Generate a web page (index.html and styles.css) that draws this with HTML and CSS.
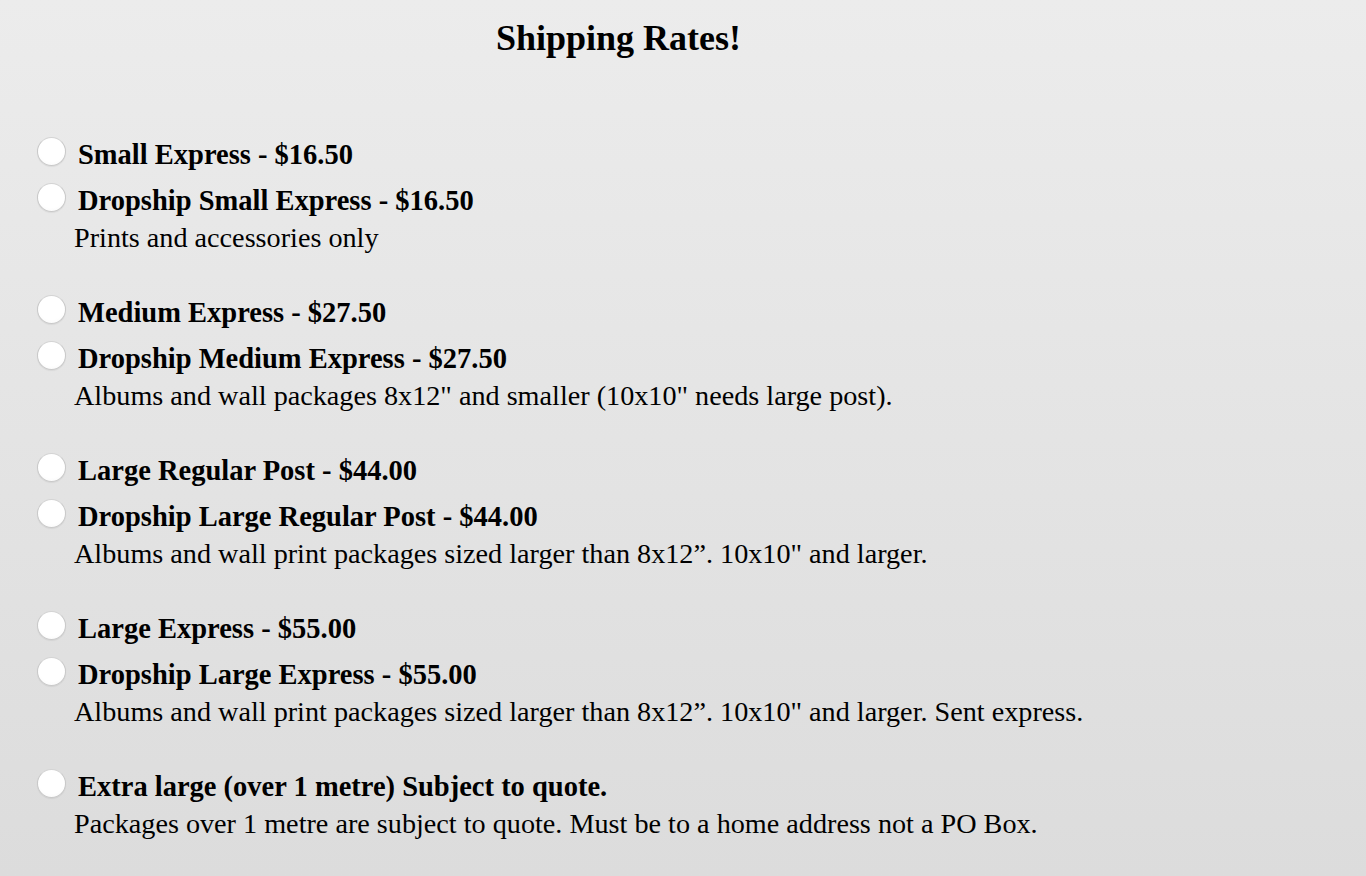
FILE: index.html
```html
<!DOCTYPE html>
<html>
<head>
<meta charset="utf-8">
<link rel="stylesheet" href="styles.css">
</head>
<body>
<div class="page">
  <h1 class="title">Shipping Rates!</h1>
  <div class="list">
    <div class="group">
      <label class="opt"><span class="radio"></span><span class="name">Small Express - $16.50</span></label>
      <label class="opt"><span class="radio"></span><span class="name">Dropship Small Express - $16.50</span></label>
      <p class="desc">Prints and accessories only</p>
    </div>
    <div class="group">
      <label class="opt"><span class="radio"></span><span class="name">Medium Express - $27.50</span></label>
      <label class="opt"><span class="radio"></span><span class="name">Dropship Medium Express - $27.50</span></label>
      <p class="desc">Albums and wall packages 8x12" and smaller (10x10" needs large post).</p>
    </div>
    <div class="group">
      <label class="opt"><span class="radio"></span><span class="name">Large Regular Post - $44.00</span></label>
      <label class="opt"><span class="radio"></span><span class="name">Dropship Large Regular Post - $44.00</span></label>
      <p class="desc">Albums and wall print packages sized larger than 8x12”. 10x10" and larger.</p>
    </div>
    <div class="group">
      <label class="opt"><span class="radio"></span><span class="name">Large Express - $55.00</span></label>
      <label class="opt"><span class="radio"></span><span class="name">Dropship Large Express - $55.00</span></label>
      <p class="desc">Albums and wall print packages sized larger than 8x12”. 10x10" and larger. Sent express.</p>
    </div>
    <div class="group">
      <label class="opt"><span class="radio"></span><span class="name">Extra large (over 1 metre) Subject to quote.</span></label>
      <p class="desc">Packages over 1 metre are subject to quote. Must be to a home address not a PO Box.</p>
    </div>
  </div>
</div>
</body>
</html>
```
FILE: styles.css
```css
html, body {
  margin: 0;
  padding: 0;
  height: 100%;
}
body {
  background: linear-gradient(to bottom, #ececec 0%, #dcdcdc 100%);
  font-family: "Liberation Serif", "Times New Roman", serif;
  color: #000;
}
.page {
  width: 1237px;
  padding-top: 17px;
}
.title {
  margin: 0;
  text-align: center;
  font-size: 36px;
  font-weight: bold;
  line-height: 42px;
}
.list {
  padding-top: 74px;
  padding-left: 37px;
  display: flex;
  flex-direction: column;
  gap: 36px;
}
.group {
  display: flex;
  flex-direction: column;
}
.opt {
  display: flex;
  align-items: center;
  gap: 12px;
  height: 46px;
}
.radio {
  width: 27px;
  height: 27px;
  border-radius: 50%;
  background: radial-gradient(circle at 50% 40%, #ffffff 60%, #f6f6f6 100%);
  border: 1px solid #c9c9c9;
  border-top-color: #d4d4d4;
  box-shadow: 0 1px 1px rgba(0,0,0,0.06);
  flex: none;
  margin-top: -9px;
}
.name {
  font-weight: bold;
  font-size: 28.5px;
  line-height: 46px;
  margin-top: -2px;
}
.desc {
  margin: 0;
  padding-left: 37px;
  font-size: 28.2px;
  line-height: 30px;
  margin-top: -2px;
  margin-bottom: 2px;
}
```
